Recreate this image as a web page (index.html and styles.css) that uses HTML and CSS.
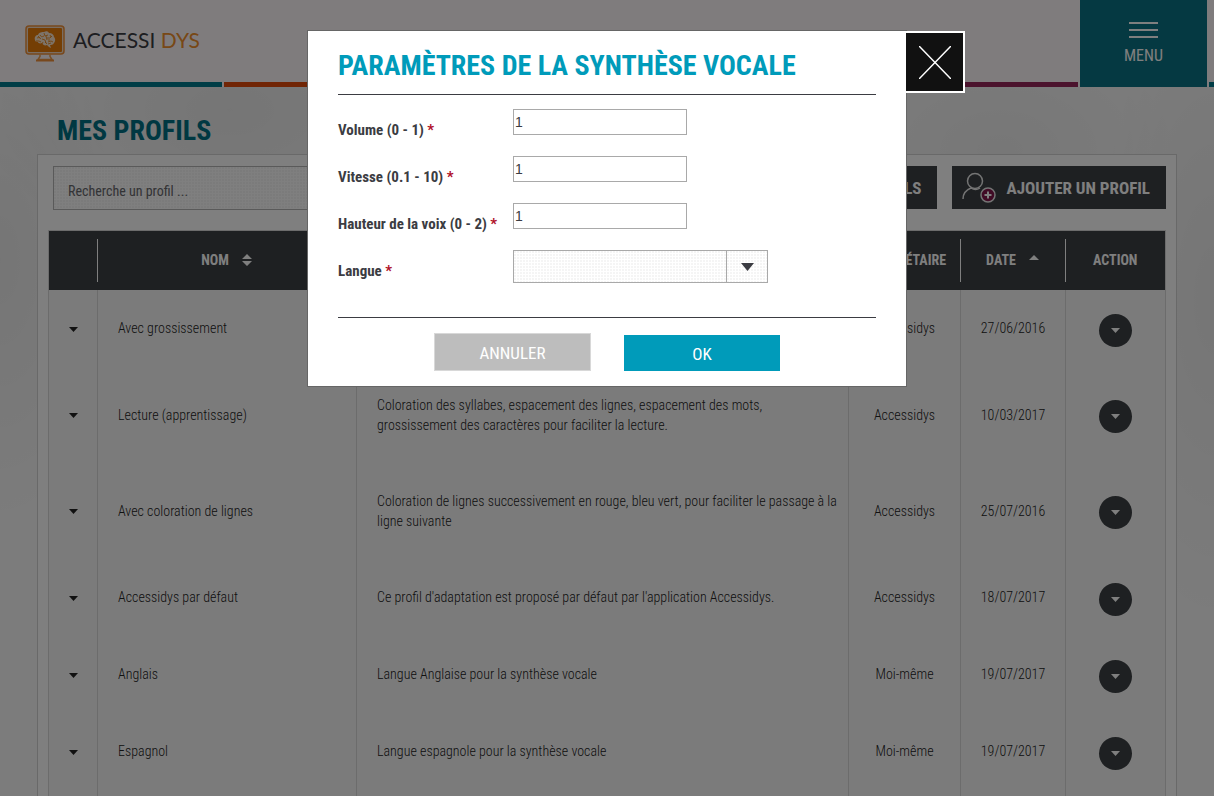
FILE: index.html
```html
<!DOCTYPE html>
<html lang="fr">
<head>
<meta charset="utf-8">
<title>Accessidys - Mes profils</title>
<link rel="stylesheet" href="styles.css">
</head>
<body>
<svg class="defs" aria-hidden="true">
  <symbol id="caret" viewBox="0 0 9 5"><path d="M0 0h9L4.500 5z" fill="currentColor"/></symbol>
  <symbol id="caret-big" viewBox="0 0 13 8"><path d="M0 0h13L6.500 8z" fill="currentColor"/></symbol>
  <symbol id="caret-up" viewBox="0 0 10 5"><path d="M0 5h10L5 0z" fill="currentColor"/></symbol>
  <symbol id="sort" viewBox="0 0 10 12"><path d="M0 5h10L5 0zM0 7h10L5 12z" fill="currentColor"/></symbol>
</svg>
<div class="page">
  <header class="header">
    <div class="brand-zone">
      <a class="brand" href="#">
        <svg class="brand-icon" viewBox="0 0 40 37" aria-hidden="true">
          <rect x="1" y="1" width="38" height="28" rx="3" fill="#f5ddc6" stroke="#f0913a" stroke-width="1.500"/>
          <rect x="3" y="3" width="34" height="24" rx="1" fill="#e87d08"/>
          <path d="M15 29.500v2l-2 3h14l-2-3v-2" fill="none" stroke="#f0a050" stroke-width="1.500"/>
          <path d="M11 35.500h18" stroke="#f0913a" stroke-width="2"/>
          <path d="M10 15c-1-3 1-5 3-5 1-3 4-3 6-3 2-1 4-1 5 1 3 0 5 2 5 4 2 2 1 5 0 6-1 2-3 2-4 2l1 3-2-1-2-2c-2 1-4 0-5-2-2 1-4 0-4-1-2 0-3-1-3-2z" fill="#fbe6d0"/>
          <path d="M12 13c2-1 3 0 4 1M15 10c1 2 2 2 4 1M19 8l1 3 3-1M11 16h3l2 1M17 14l3 1 1 3M22 13h3l2-2M23 17l3-1 2 1M18 17l-1 2M24 14v2M26 18l-3 1M13 11l2 2M21 11l1 4M25 10l1 2M20 17l2 2" fill="none" stroke="#e87d08" stroke-width=".8"/>
        </svg>
        <span class="brand-name">ACCESSI <span class="brand-accent">DYS</span></span>
      </a>
    </div>
    <div class="menu-zone">
      <button class="menu" type="button">
        <svg class="menu-icon" viewBox="0 0 29 16" aria-hidden="true"><path d="M0 1h29M0 8h29M0 15h29" stroke="currentColor" stroke-width="2"/></svg>
        MENU
      </button>
    </div>
    <div class="stripes"><i class="teal"></i><i class="orange"></i><i class="green"></i><i class="blue"></i><i class="plum"></i></div>
    <i class="stripe-end"></i>
  </header>
  <main class="main">
    <h1 class="title">MES PROFILS</h1>
    <section class="card">
      <div class="toolbar">
        <input class="search" type="text" placeholder="Recherche un profil ..." aria-label="Recherche un profil">
        <button class="dark-btn" type="button">RENOMMER PROFILS</button>
        <button class="dark-btn add" type="button">
          <svg class="add-icon" viewBox="0 0 34 32" fill="none" aria-hidden="true">
            <circle cx="13" cy="9" r="7.500" stroke="#e8e8e8" stroke-width="1.500"/>
            <path d="M1 27c0-6 3-9 8-11 3 2 6 2 9 0" stroke="#e8e8e8" stroke-width="1.500"/>
            <circle cx="26" cy="23" r="7" fill="#80164a" stroke="#e8e8e8" stroke-width="1.500"/>
            <path d="M26 19.500v7M22.500 23h7" stroke="#fff" stroke-width="2"/>
          </svg>
          AJOUTER UN PROFIL
        </button>
      </div>
      <table class="profiles">
        <colgroup><col class="c-toggle"><col class="c-name"><col><col class="c-owner"><col class="c-date"><col class="c-action"></colgroup>
        <thead>
          <tr>
            <th><span class="head"></span></th>
            <th><span class="head">NOM <svg class="sort"><use href="#sort"/></svg></span></th>
            <th><span class="head">DESCRIPTION</span></th>
            <th><span class="head">PROPRIÉTAIRE</span></th>
            <th><span class="head">DATE <svg class="sort-up"><use href="#caret-up"/></svg></span></th>
            <th><span class="head">ACTION</span></th>
          </tr>
        </thead>
        <tbody>
          <tr><td class="mid"><svg class="caret"><use href="#caret"/></svg></td><td>Avec grossissement</td><td class="desc">Grossissement des caractères.</td><td class="mid">Accessidys</td><td class="mid">27/06/2016</td><td class="act"><button class="round" type="button" aria-label="Actions"><svg class="caret"><use href="#caret"/></svg></button></td></tr>
          <tr><td class="mid"><svg class="caret"><use href="#caret"/></svg></td><td>Lecture (apprentissage)</td><td class="desc">Coloration des syllabes, espacement des lignes, espacement des mots,<br>grossissement des caractères pour faciliter la lecture.</td><td class="mid">Accessidys</td><td class="mid">10/03/2017</td><td class="act"><button class="round" type="button" aria-label="Actions"><svg class="caret"><use href="#caret"/></svg></button></td></tr>
          <tr><td class="mid"><svg class="caret"><use href="#caret"/></svg></td><td>Avec coloration de lignes</td><td class="desc">Coloration de lignes successivement en rouge, bleu vert, pour faciliter le passage à la<br>ligne suivante</td><td class="mid">Accessidys</td><td class="mid">25/07/2016</td><td class="act"><button class="round" type="button" aria-label="Actions"><svg class="caret"><use href="#caret"/></svg></button></td></tr>
          <tr><td class="mid"><svg class="caret"><use href="#caret"/></svg></td><td>Accessidys par défaut</td><td class="desc">Ce profil d'adaptation est proposé par défaut par l'application Accessidys.</td><td class="mid">Accessidys</td><td class="mid">18/07/2017</td><td class="act"><button class="round" type="button" aria-label="Actions"><svg class="caret"><use href="#caret"/></svg></button></td></tr>
          <tr><td class="mid"><svg class="caret"><use href="#caret"/></svg></td><td>Anglais</td><td class="desc">Langue Anglaise pour la synthèse vocale</td><td class="mid">Moi-même</td><td class="mid">19/07/2017</td><td class="act"><button class="round" type="button" aria-label="Actions"><svg class="caret"><use href="#caret"/></svg></button></td></tr>
          <tr><td class="mid"><svg class="caret"><use href="#caret"/></svg></td><td>Espagnol</td><td class="desc">Langue espagnole pour la synthèse vocale</td><td class="mid">Moi-même</td><td class="mid">19/07/2017</td><td class="act"><button class="round" type="button" aria-label="Actions"><svg class="caret"><use href="#caret"/></svg></button></td></tr>
          <tr><td></td><td></td><td></td><td></td><td></td><td></td></tr>
        </tbody>
      </table>
    </section>
  </main>
</div>
<div class="overlay">
  <form class="modal" role="dialog" aria-labelledby="modal-title">
    <button class="close" type="button" aria-label="Fermer">
      <svg class="close-icon" viewBox="0 0 32 33" aria-hidden="true"><path d="M0 0l32 33M32 0L0 33" stroke="#fff" stroke-width="1.500"/></svg>
    </button>
    <h2 class="modal-title" id="modal-title">PARAMÈTRES DE LA SYNTHÈSE VOCALE</h2>
    <div class="fields">
      <div class="field"><label for="volume">Volume (0 - 1) <span class="req">*</span></label><input class="num" id="volume" type="text" value="1"></div>
      <div class="field"><label for="speed">Vitesse (0.1 - 10) <span class="req">*</span></label><input class="num" id="speed" type="text" value="1"></div>
      <div class="field"><label for="pitch">Hauteur de la voix (0 - 2) <span class="req">*</span></label><input class="num" id="pitch" type="text" value="1"></div>
      <div class="field"><label for="lang">Langue <span class="req">*</span></label>
        <div class="select"><select id="lang"><option></option></select><span class="select-arrow"><svg class="big-caret"><use href="#caret-big"/></svg></span></div>
      </div>
    </div>
    <div class="actions">
      <button class="btn cancel" type="button">ANNULER</button>
      <button class="btn ok" type="submit">OK</button>
    </div>
  </form>
</div>
</body>
</html>
```
FILE: styles.css
```css
* { box-sizing: border-box; }
body {
  margin: 0;
  height: 100vh;
  overflow: hidden;
  font: 14px/20px "Roboto Condensed", "Liberation Sans Narrow", sans-serif;
  color: #3b3c42;
}
button, input, select { font: inherit; margin: 0; border-radius: 0; }
button { border: 0; padding: 0; cursor: pointer; }
.defs { position: absolute; width: 0; height: 0; }

.page {
  height: 100vh;
  overflow: hidden;
  background:
    radial-gradient(ellipse 260px 150px at 230px 110px, rgba(0,0,0,.05), transparent),
    radial-gradient(ellipse 120px 260px at 0 260px, rgba(0,0,0,.05), transparent),
    radial-gradient(ellipse 180px 120px at 1000px 150px, rgba(0,0,0,.04), transparent),
    radial-gradient(ellipse 120px 320px at 100% 300px, rgba(0,0,0,.05), transparent),
    #f8f8f8;
}

.header {
  display: grid;
  grid-template-columns: 1fr 127px 5px;
  grid-template-rows: 82px 5px;
  column-gap: 2px;
  background: #fff9fb;
}
.brand-zone { display: flex; align-items: center; padding: 4px 25px 0; }
.brand { display: flex; align-items: flex-start; gap: 8px; text-decoration: none; color: #3b3c42; }
.brand-icon { width: 40px; height: 37px; }
.brand-name { padding-top: 3px; font: 21px/24px Lato, sans-serif; }
.brand-accent { color: #f0902c; }
.menu-zone { grid-row: 1 / 3; grid-column: 2; display: flex; }
.menu {
  flex: 1;
  display: flex;
  flex-direction: column;
  align-items: center;
  gap: 8px;
  padding-top: 22px;
  background: #0a7284;
  color: #fff;
  font-size: 16px;
  line-height: 20px;
}
.menu-icon { width: 29px; height: 16px; }
.stripes { grid-row: 2; grid-column: 1; display: flex; gap: 2px; }
.stripes i { flex: 1; }
.stripes .teal { flex: 0 0 222px; }
.teal, .stripe-end { background: #007a8c; }
.orange { background: #e24a0a; }
.green { background: #7fae2b; }
.blue { background: #2b6cae; }
.plum { background: #96265a; }
.stripe-end { grid-row: 2; grid-column: 3; }

.main { padding: 31px 37px 0; }
.title { margin: 0 0 10px; padding-left: 20px; color: #007184; font-size: 28px; line-height: 26px; }
.card { padding: 11px 10px 0; border: 1px solid #d2d2d2; background: #fff; }
.toolbar { display: flex; gap: 15px; padding: 0 0 20px 5px; }
.search {
  flex: 1;
  min-width: 0;
  height: 44px;
  padding: 6px 14px 0;
  border: 1px solid #b4b4b4;
  background: radial-gradient(circle at 1px 1px, #e2e2e2 0, transparent 1px) 0 0 / 3px 3px #fff;
  color: #3b3c42;
}
.search::placeholder { color: #66676c; opacity: 1; }
.dark-btn {
  height: 43px;
  padding: 0 16px;
  background: #3c4044;
  color: #fff;
  font-size: 17px;
  font-weight: bold;
  white-space: nowrap;
}
.add { display: flex; align-items: center; gap: 10px; padding: 0 16px 0 10px; }
.add-icon { width: 34px; height: 32px; }

.profiles { width: 100%; table-layout: fixed; border-collapse: collapse; border: 1px solid #d8d8d8; background: #f7f7f7; }
.c-toggle { width: 49px; }
.c-name { width: 259px; }
.c-owner { width: 112px; }
.c-date { width: 105px; }
.c-action { width: 100px; }
.profiles th { height: 59px; padding: 0; background: #3c4044; color: #fff; font-size: 14px; }
.head { display: flex; align-items: center; justify-content: center; gap: 13px; height: 43px; border-right: 1px solid #fff; }
th:last-child .head { border-right: 0; }
.sort { width: 10px; height: 12px; }
.sort-up { width: 10px; height: 5px; margin-bottom: 5px; }
.profiles td { height: 77px; padding: 28px 20px; border-right: 1px solid #d8d8d8; vertical-align: middle; font-weight: 300; color: #222; }
.profiles td.desc { padding-right: 0; }
.profiles td.mid { padding-left: 0; padding-right: 0; text-align: center; }
.profiles td.act { padding: 4px 0 0; text-align: center; }
.caret { width: 9px; height: 5px; vertical-align: middle; }
.round {
  display: inline-flex;
  align-items: center;
  justify-content: center;
  width: 33px;
  height: 33px;
  border-radius: 50%;
  background: #3c4044;
  color: #fff;
  vertical-align: middle;
}

.overlay { position: fixed; inset: 0; padding-top: 30px; background: rgba(0,0,0,.5); }
.modal {
  position: relative;
  width: 600px;
  max-width: 100%;
  margin: 0 auto;
  padding: 20px 30px 15px;
  border: 1px solid #666;
  background: #fff;
}
.close {
  position: absolute;
  top: 0;
  left: 100%;
  display: flex;
  align-items: center;
  justify-content: center;
  width: 59px;
  height: 62px;
  border: 2px solid #fff;
  border-left: 0;
  background: #111;
}
.close-icon { width: 32px; height: 33px; }
.modal-title { margin: 0; padding-bottom: 13px; border-bottom: 1px solid #3b3c42; color: #009bba; font-size: 28px; line-height: 30px; white-space: nowrap; }
.fields { display: flex; flex-direction: column; gap: 21px; padding: 14px 0 34px; border-bottom: 1px solid #3b3c42; }
.field { display: flex; height: 26px; }
.field:last-child { height: 33px; }
.field label { width: 175px; padding-top: 11px; font-weight: bold; font-size: 15px; white-space: nowrap; }
.req { color: #b0102a; }
.num { width: 174px; height: 26px; padding: 0 1px; border: 1px solid #a9a9a9; background: #fff; color: #3b3c42; font: 14px/20px "Liberation Sans", Arial, sans-serif; }
.select { position: relative; width: 255px; height: 33px; }
.select select {
  width: 100%;
  height: 100%;
  appearance: none;
  padding: 0 50px 0 10px;
  border: 1px solid #a9a9a9;
  background: radial-gradient(circle at 1px 1px, #dedede 0, transparent 1px) 0 0 / 3px 3px #fff;
}
.select-arrow {
  position: absolute;
  inset: 0 0 0 auto;
  display: flex;
  align-items: center;
  justify-content: center;
  width: 42px;
  border-left: 1px solid #a9a9a9;
  pointer-events: none;
}
.big-caret { width: 13px; height: 8px; }
.actions { display: flex; align-items: flex-end; justify-content: center; gap: 33px; padding-top: 15px; }
.btn { width: 156px; height: 36px; padding-top: 2px; color: #fff; font-size: 17px; }
.cancel { width: 157px; height: 38px; border: 1px solid #d8d8d8; background: #bdbdbd; }
.ok { background: #009bba; }
```
